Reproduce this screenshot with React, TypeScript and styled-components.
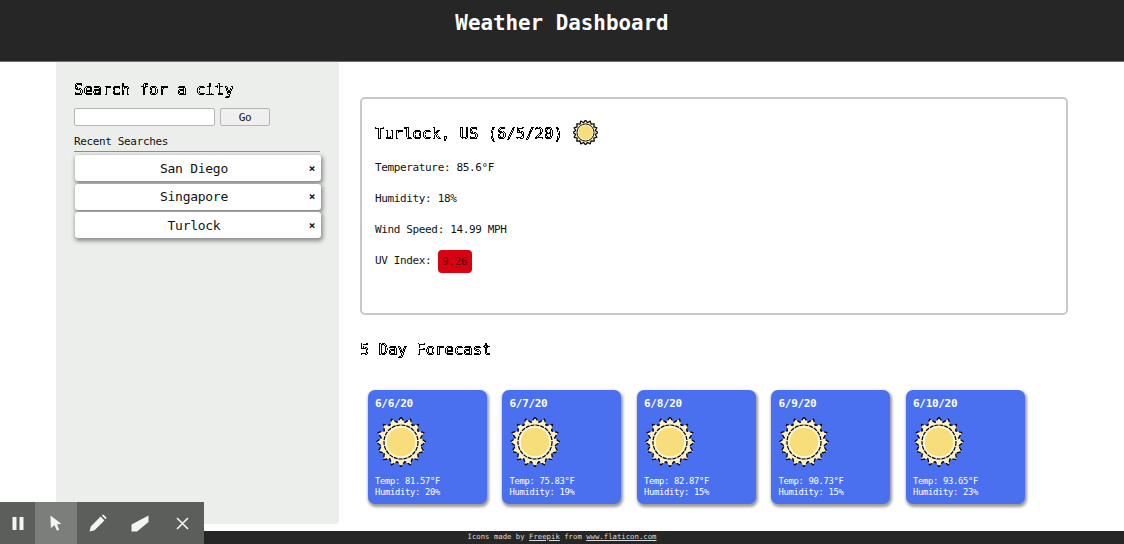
import { FC } from "react";
import styled, { createGlobalStyle } from "styled-components";

const GlobalStyle = createGlobalStyle`
  html, body {
    margin: 0;
    height: 100%;
    overflow: hidden;
    background: #fff;
    font-family: "DejaVu Sans Mono", "Liberation Mono", monospace;
    font-size: 11px;
    letter-spacing: -0.36px;
    color: #111;
  }
`;

const cities = ["San Diego", "Singapore", "Turlock"];

const forecast = [
  { date: "6/6/20", temp: "81.57", humidity: 20 },
  { date: "6/7/20", temp: "75.83", humidity: 19 },
  { date: "6/8/20", temp: "82.87", humidity: 15 },
  { date: "6/9/20", temp: "90.73", humidity: 15 },
  { date: "6/10/20", temp: "93.65", humidity: 23 },
];

const spikes = (count: number, outer: number, inner: number) => {
  const points: string[] = [];
  for (let i = 0; i < count * 2; i++) {
    const radius = i % 2 === 0 ? outer : inner;
    const angle = (Math.PI * i) / count - Math.PI / 2;
    points.push(`${(25 + radius * Math.cos(angle)).toFixed(2)},${(25 + radius * Math.sin(angle)).toFixed(2)}`);
  }
  return points.join(" ");
};

const SunIcon: FC<{ size: number }> = ({ size }) => (
  <svg width={size} height={size} viewBox="0 0 50 50" aria-hidden="true">
    <polygon points={spikes(16, 24.8, 20)} fill="#fbf0c4" stroke="#000" strokeWidth={size < 30 ? 2.4 : 1.3} strokeDasharray={size < 30 ? undefined : "4 2"} strokeLinejoin="round" />
    <circle cx="25" cy="25" r="17" fill="#fbf0c4" stroke="#000" strokeWidth={size < 30 ? 2 : 1.2} strokeDasharray={size < 30 ? undefined : "4 1"} />
    <circle cx="25" cy="25" r="15" fill="#f8dd7b" stroke="#fff" strokeWidth="1" />
  </svg>
);

export default function App() {
  return (
    <Page>
      <GlobalStyle />
      {/* turns the soft edges of the outlined headings into hard pixels */}
      <HiddenDefs aria-hidden="true">
        <filter id="hard-edge" colorInterpolationFilters="sRGB">
          <feComponentTransfer>
            <feFuncR type="discrete" tableValues="0 1" />
            <feFuncG type="discrete" tableValues="0 1" />
            <feFuncB type="discrete" tableValues="0 1" />
            <feFuncA type="discrete" tableValues="0 1" />
          </feComponentTransfer>
        </filter>
      </HiddenDefs>
      <Header>
        <HeaderTitle>Weather Dashboard</HeaderTitle>
      </Header>
      <Content>
        <Sidebar>
          <PixelHeading>Search for a city</PixelHeading>
          <SearchRow>
            <SearchInput />
            <GoButton>Go</GoButton>
          </SearchRow>
          <RecentLabel>Recent Searches</RecentLabel>
          <CityList>
            {cities.map((city) => (
              <CityItem key={city}>
                <CityName>{city}</CityName>
                <RemoveMark>×</RemoveMark>
              </CityItem>
            ))}
          </CityList>
        </Sidebar>
        <Main>
          <CurrentCard>
            <CurrentTitle>
              <CurrentHeading>Turlock, US (6/5/20)</CurrentHeading>
              <SunIcon size={25} />
            </CurrentTitle>
            <Stat>Temperature: 85.6°F</Stat>
            <Stat>Humidity: 18%</Stat>
            <Stat>Wind Speed: 14.99 MPH</Stat>
            <Stat>
              UV Index: <UvBadge>9.26</UvBadge>
            </Stat>
          </CurrentCard>
          <ForecastHeading>5 Day Forecast</ForecastHeading>
          <ForecastRow>
            {forecast.map((day) => (
              <DayCard key={day.date}>
                <DayDate>{day.date}</DayDate>
                <DaySun>
                  <SunIcon size={50} />
                </DaySun>
                <DayText>Temp: {day.temp}°F</DayText>
                <DayText>Humidity: {day.humidity}%</DayText>
              </DayCard>
            ))}
          </ForecastRow>
        </Main>
      </Content>
      <Footer>
        Icons made by <FooterLink>Freepik</FooterLink> from <FooterLink>www.flaticon.com</FooterLink>
      </Footer>
      <Toolbar>
        <ToolButton $width={35}>
          <svg width="12" height="13" viewBox="0 0 12 13">
            <rect x="0.5" width="4" height="13" fill="#f4f4f4" />
            <rect x="7.5" width="4" height="13" fill="#f4f4f4" />
          </svg>
        </ToolButton>
        <ToolButton $width={42} $active>
          <svg width="12" height="16" viewBox="0 0 12 16">
            <path d="M0.5 0.5 L11.5 9 L7 9.3 L9.3 15 L6.8 15.6 L4.6 10.2 L0.8 13 Z" fill="#f4f4f4" />
          </svg>
        </ToolButton>
        <ToolButton $width={42}>
          <svg width="18" height="18" viewBox="0 0 18 18">
            <path d="M0.5 17.5 L1.8 12.4 L11.6 2.6 L15.4 6.4 L5.6 16.2 Z M12.8 1.4 L14.2 0.4 L17.6 3.8 L16.6 5.2 Z" fill="#f4f4f4" />
          </svg>
        </ToolButton>
        <ToolButton $width={42}>
          <svg width="18" height="17" viewBox="0 0 18 17">
            <path d="M0.5 9.5 L17.5 0.5 L17.5 7 L6 16.5 L0.5 16.5 Z" fill="#f4f4f4" />
          </svg>
        </ToolButton>
        <ToolButton $width={43}>
          <svg width="13" height="13" viewBox="0 0 13 13">
            <path d="M1 1 L12 12 M12 1 L1 12" stroke="#f4f4f4" strokeWidth="1.6" fill="none" />
          </svg>
        </ToolButton>
      </Toolbar>
    </Page>
  );
}

const Page = styled.div`
  position: relative;
  display: flex;
  flex-direction: column;
  height: 544px;
  overflow: hidden;
`;

const HiddenDefs = styled.svg`
  position: absolute;
  width: 0;
  height: 0;
`;

const Header = styled.header`
  flex: 0 0 62px;
  box-sizing: border-box;
  padding-top: 10px;
  background: #262626;
  border-bottom: 1px solid #6f6f6c;
  text-align: center;
`;

const HeaderTitle = styled.h1`
  margin: 0;
  font-size: 20.85px;
  line-height: 27px;
  font-weight: 700;
  letter-spacing: 0;
  color: #fff;
`;

const Content = styled.div`
  flex: 1;
  display: flex;
  min-height: 0;
  padding: 0 56px 7px;
`;

const Sidebar = styled.aside`
  flex: 0 0 283px;
  box-sizing: border-box;
  padding: 19px 17px 0 18px;
  background: #eceeec;
  border-radius: 0 0 4px 4px;
`;

const PixelHeading = styled.h2`
  margin: 0;
  font-size: 15.6px;
  line-height: 19px;
  font-weight: 400;
  letter-spacing: 0;
  color: #fff;
  -webkit-text-stroke: 0.8px #000;
  filter: url(#hard-edge);
`;

const CurrentHeading = styled(PixelHeading)`
  margin-top: 3px;
`;

const SearchRow = styled.div`
  display: flex;
  gap: 6px;
  margin-top: 8px;
`;

const SearchInput = styled.input`
  box-sizing: border-box;
  width: 141px;
  height: 18px;
  padding: 0;
  background: #fff;
  border: 1px solid #b5b5b5;
  border-radius: 2px;
`;

const GoButton = styled.button`
  box-sizing: border-box;
  width: 50px;
  height: 18px;
  margin-left: -1px;
  padding: 0;
  background: #efefef;
  border: 1px solid #b5b5b5;
  border-radius: 2px;
  font: inherit;
  letter-spacing: inherit;
  color: #111;
`;

const RecentLabel = styled.div`
  width: 246px;
  margin-top: 9px;
  padding-bottom: 3px;
  line-height: 13px;
  border-bottom: 1px solid #8c8c8c;
`;

const CityList = styled.ul`
  list-style: none;
  margin: 3px 0 0 1px;
  padding: 0;
`;

const CityItem = styled.li`
  position: relative;
  display: flex;
  align-items: center;
  justify-content: center;
  box-sizing: border-box;
  width: 246px;
  height: 26px;
  margin-bottom: 2.6px;
  padding-right: 8px;
  background: #fff;
  border-radius: 3px;
  box-shadow: 1px 2px 4px 1px #8a8a8a;
`;

const CityName = styled.span`
  font-size: 13px;
  letter-spacing: -0.28px;
`;

const RemoveMark = styled.span`
  position: absolute;
  right: 6px;
  font-size: 11px;
  font-weight: 700;
`;

const Main = styled.main`
  flex: 1;
  min-width: 0;
  padding: 35px 0 0 21px;
`;

const CurrentCard = styled.section`
  box-sizing: border-box;
  width: 708px;
  height: 218px;
  padding: 21px 13px 0;
  border: 2px solid #c8c8c8;
  border-radius: 5px;
`;

const CurrentTitle = styled.div`
  display: flex;
  align-items: center;
  gap: 10px;
  height: 25px;
  margin-bottom: -1px;
`;

const Stat = styled.p`
  display: flex;
  align-items: center;
  height: 15px;
  margin: 16px 0 0;
  line-height: 15px;
  white-space: pre;
`;

const UvBadge = styled.span`
  flex: none;
  box-sizing: border-box;
  width: 34px;
  height: 23px;
  margin: 1px 0 0 0;
  line-height: 23px;
  text-align: center;
  background: #d70212;
  border-radius: 4px;
  color: #5a0008;
`;

const ForecastHeading = styled(PixelHeading)`
  margin-top: 26px;
`;

const ForecastRow = styled.div`
  display: flex;
  gap: 15.5px;
  margin: 30px 0 0 7.5px;
`;

const DayCard = styled.article`
  box-sizing: border-box;
  width: 119px;
  height: 114px;
  padding: 7px 7.5px 0;
  background: #4a70f0;
  border-radius: 7px;
  box-shadow: 1px 2px 3px 1px #9a9a9a;
  color: #fff;
`;

const DayDate = styled.div`
  font-size: 11px;
  letter-spacing: -0.3px;
  line-height: 14px;
  font-weight: 700;
`;

const DaySun = styled.div`
  display: flex;
  height: 50px;
  margin: 6px 0 9px 0.5px;
`;

const DayText = styled.div`
  font-size: 8.8px;
  letter-spacing: -0.3px;
  line-height: 10.5px;
`;

const Footer = styled.footer`
  flex: 0 0 13px;
  background: #262626;
  color: #dcdcdc;
  font-size: 7.3px;
  letter-spacing: 0;
  line-height: 11px;
  text-align: center;
`;

const FooterLink = styled.span`
  text-decoration: underline;
`;

const Toolbar = styled.div`
  position: absolute;
  left: 0;
  bottom: 0;
  display: flex;
  height: 42px;
  background: #5c5e5b;
`;

const ToolButton = styled.div<{ $width: number; $active?: boolean }>`
  display: flex;
  align-items: center;
  justify-content: center;
  width: ${({ $width }) => $width}px;
  background: ${({ $active }) => ($active ? "#7b7e7a" : "transparent")};
`;
